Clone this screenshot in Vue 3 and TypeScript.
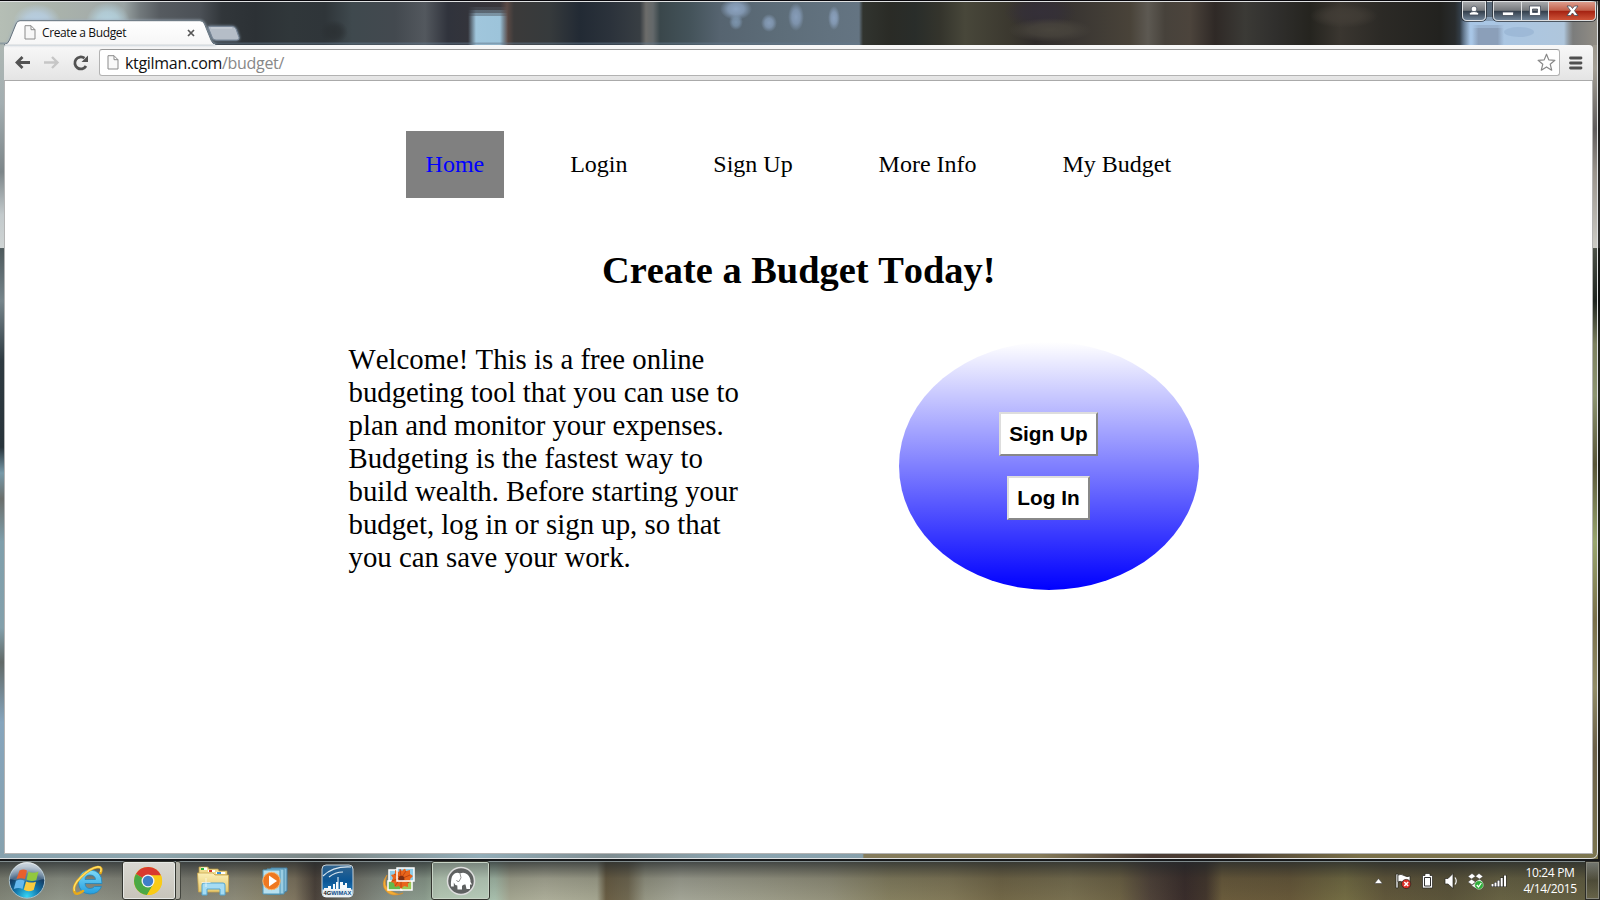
<script setup lang="ts">
interface Stop { x: number; c: string }
interface Glow { x: number; y: number; rx: number; ry: number; c: string }

const navItems: string[] = ['Home', 'Login', 'Sign Up', 'More Info', 'My Budget']
const active = 'Home'
const intro: string[] = [
  'Welcome! This is a free online',
  'budgeting tool that you can use to',
  'plan and monitor your expenses.',
  'Budgeting is the fastest way to',
  'build wealth. Before starting your',
  'budget, log in or sign up, so that',
  'you can save your work.',
]

const toStops = (list: [number, string][]): Stop[] => list.map(([x, c]) => ({ x: x / 1600, c }))

const titleStops = toStops([
  [0, '#b5beb5'], [60, '#a9b2ab'], [92, '#a5adaa'], [124, '#99a3a3'], [140, '#72797c'], [160, '#565b60'],
  [200, '#4b5056'], [222, '#31363a'], [255, '#2c3135'], [290, '#30373a'], [325, '#2f3539'], [352, '#3f494e'],
  [395, '#43494f'], [425, '#53585e'], [448, '#30333c'], [500, '#39363a'], [507, '#5c4a45'], [514, '#3b3a3a'],
  [550, '#363a3c'], [580, '#222a34'], [610, '#2b323b'], [640, '#383e43'], [646, '#6c6c6a'], [653, '#63686a'],
  [660, '#3a474b'], [690, '#44535a'], [720, '#566470'], [780, '#5d6d79'], [830, '#62727f'], [859, '#647482'],
  [863, '#31342f'], [890, '#2a2b26'], [915, '#292d2a'], [940, '#34342c'], [965, '#48473a'], [1010, '#3b382f'],
  [1035, '#2f2b2a'], [1080, '#3b3733'], [1130, '#494339'], [1148, '#5d5952'], [1165, '#47423b'], [1190, '#4c443c'],
  [1215, '#2f2926'], [1245, '#3b3a36'], [1275, '#302f2d'], [1310, '#25241f'], [1340, '#3a3630'], [1380, '#2c2a26'],
  [1440, '#22221f'], [1455, '#292c2d'], [1464, '#3b4b5c'], [1480, '#5b6c7d'], [1560, '#64727f'], [1568, '#77797a'], [1600, '#948f86'],
])
const taskStops = toStops([
  [0, '#85897b'], [60, '#959b8e'], [110, '#8f9285'], [190, '#84857a'], [235, '#918f7c'], [260, '#8e8970'],
  [295, '#827862'], [315, '#4c433b'], [332, '#5d5850'], [350, '#75766c'], [390, '#8b968c'], [425, '#8fa091'],
  [440, '#a6baa5'], [495, '#adc5b2'], [510, '#a9ab95'], [545, '#b2b39e'], [597, '#a9aa94'], [606, '#6c6045'],
  [628, '#736b53'], [645, '#9a9b88'], [680, '#a8aa9b'], [760, '#a1a18d'], [830, '#98967f'], [890, '#898362'],
  [950, '#857c5a'], [1000, '#756a49'], [1070, '#7c7352'], [1120, '#706546'], [1150, '#51443a'], [1185, '#3a2d2b'],
  [1206, '#44372d'], [1222, '#6d5e3d'], [1290, '#695a3a'], [1345, '#777045'], [1385, '#645a3c'], [1450, '#5d563b'],
  [1500, '#6a6545'], [1600, '#646042'],
])
const glows: Glow[] = [
  { x: 37, y: 22, rx: 24, ry: 18, c: '#b9d2ea' },
  { x: 108, y: 22, rx: 22, ry: 20, c: '#b8d8e6' },
  { x: 334, y: 32, rx: 14, ry: 12, c: '#2b3033' },
  { x: 736, y: 9, rx: 16, ry: 11, c: '#92aac9' },
  { x: 736, y: 22, rx: 7, ry: 8, c: '#8099b3' },
  { x: 769, y: 23, rx: 8, ry: 9, c: '#8ba2bf' },
  { x: 796, y: 17, rx: 8, ry: 14, c: '#8ba2c0' },
  { x: 834, y: 18, rx: 6, ry: 12, c: '#8fa6c4' },
  { x: 1040, y: 12, rx: 36, ry: 18, c: '#35303a' },
  { x: 1050, y: 30, rx: 42, ry: 12, c: '#4b473f' },
  { x: 1344, y: 16, rx: 34, ry: 12, c: '#433e37' },
]
</script>

<template>
  <div class="desktop">
    <svg class="wallpaper" width="1600" height="900" viewBox="0 0 1600 900">
      <defs>
        <linearGradient id="titleGlass"><stop v-for="(s, i) in titleStops" :key="i" :offset="s.x" :stop-color="s.c" /></linearGradient>
        <linearGradient id="taskGlass"><stop v-for="(s, i) in taskStops" :key="i" :offset="s.x" :stop-color="s.c" /></linearGradient>
        <radialGradient v-for="(g, i) in glows" :id="'glow' + i" :key="i">
          <stop offset="0" :stop-color="g.c" stop-opacity=".9" /><stop offset=".5" :stop-color="g.c" stop-opacity=".7" /><stop offset="1" :stop-color="g.c" stop-opacity="0" />
        </radialGradient>
        <linearGradient id="pane"><stop stop-color="#a0c6dc" stop-opacity="0" /><stop offset=".2" stop-color="#a0c6dc" /><stop offset=".8" stop-color="#9dc4da" /><stop offset="1" stop-color="#9dc4da" stop-opacity="0" /></linearGradient>
        <linearGradient id="screen"><stop stop-color="#a8c3e0" stop-opacity="0" /><stop offset=".09" stop-color="#a8c6e6" /><stop offset=".92" stop-color="#afc6dc" /><stop offset="1" stop-color="#a8b3bb" stop-opacity="0" /></linearGradient>
        <linearGradient id="patch"><stop stop-color="#8b9fb9" stop-opacity="0" /><stop offset=".2" stop-color="#8b9fb9" /><stop offset=".8" stop-color="#8b9fb9" /><stop offset="1" stop-color="#8b9fb9" stop-opacity="0" /></linearGradient>
        <linearGradient id="leftEdge" gradientUnits="userSpaceOnUse" x1="0" y1="0" x2="0" y2="860">
          <stop offset="0" stop-color="#b5bdb4" /><stop offset=".12" stop-color="#a3aeb1" />
          <stop offset=".2" stop-color="#7d8689" /><stop offset=".25" stop-color="#c3cacc" />
          <stop offset=".288" stop-color="#cfd4d4" /><stop offset=".289" stop-color="#4d595c" />
          <stop offset=".35" stop-color="#76858b" /><stop offset=".42" stop-color="#2e3a41" />
          <stop offset=".52" stop-color="#28343b" /><stop offset=".55" stop-color="#7799a8" />
          <stop offset=".58" stop-color="#6b6f6c" /><stop offset=".63" stop-color="#7f9fab" />
          <stop offset=".73" stop-color="#83a0ab" /><stop offset=".77" stop-color="#626a68" />
          <stop offset=".84" stop-color="#86a5bd" /><stop offset="1" stop-color="#86a1ad" />
        </linearGradient>
        <linearGradient id="rightEdge" gradientUnits="userSpaceOnUse" x1="0" y1="0" x2="0" y2="860">
          <stop offset="0" stop-color="#8e8a80" /><stop offset=".08" stop-color="#a5a096" />
          <stop offset=".15" stop-color="#5f5c5c" /><stop offset=".2" stop-color="#9a948c" />
          <stop offset=".288" stop-color="#cccbc5" /><stop offset=".289" stop-color="#4c5148" />
          <stop offset=".35" stop-color="#1f241f" /><stop offset=".4" stop-color="#7d8160" />
          <stop offset=".46" stop-color="#8e9672" /><stop offset=".54" stop-color="#585538" />
          <stop offset=".63" stop-color="#9aa76f" /><stop offset=".72" stop-color="#7a704a" />
          <stop offset=".8" stop-color="#928d68" /><stop offset=".87" stop-color="#6b6049" />
          <stop offset="1" stop-color="#7c7650" />
        </linearGradient>
        <linearGradient id="bottomEdge">
          <stop offset="0" stop-color="#87a2ae" /><stop offset=".1" stop-color="#8ca5ad" />
          <stop offset=".2" stop-color="#7b8584" /><stop offset=".3" stop-color="#93aeb9" />
          <stop offset=".38" stop-color="#7f8d91" /><stop offset=".46" stop-color="#8ba5b1" />
          <stop offset=".539" stop-color="#87a0ab" /><stop offset=".54" stop-color="#857c5c" />
          <stop offset=".65" stop-color="#857a59" /><stop offset=".72" stop-color="#493a33" />
          <stop offset=".77" stop-color="#4c4033" /><stop offset=".85" stop-color="#7a7049" />
          <stop offset="1" stop-color="#7c7650" />
        </linearGradient>
        <linearGradient id="barShade" x2="0" y2="1">
          <stop offset="0" stop-color="#20262a" stop-opacity=".75" /><stop offset=".45" stop-color="#222" stop-opacity=".2" />
          <stop offset="1" stop-color="#222" stop-opacity=".04" />
        </linearGradient>
      </defs>
      <rect width="1600" height="860" fill="url(#titleGlass)" />
      <ellipse v-for="(g, i) in glows" :key="i" :cx="g.x" :cy="g.y" :rx="g.rx" :ry="g.ry" :fill="`url(#glow${i})`" />
      <path d="M468 16H508V45H468z" fill="url(#pane)" />
      <path d="M468 13H508V16H468z" fill="url(#pane)" opacity=".65" />
      <path d="M468 10H508V13H468z" fill="url(#pane)" opacity=".35" />
      <path d="M468 7H508V10H468z" fill="url(#pane)" opacity=".1" />
      <path d="M1460 21H1573V45H1460z" fill="url(#screen)" />
      <path d="M1460 17H1573V21H1460z" fill="url(#screen)" opacity=".55" />
      <path d="M1472 28H1504V45H1472z" fill="url(#patch)" /><path d="M1472 25H1504V28H1472z" fill="url(#patch)" opacity=".5" />
      <ellipse cx="1519" cy="32" rx="15" ry="5" fill="#94b1d1" opacity=".6" />
      <path d="M0 43.500h860" stroke="#64798b" stroke-width="2" opacity=".5" />
      <rect y="45" width="5" height="815" fill="url(#leftEdge)" />
      <rect x="1593" y="45" width="7" height="815" fill="url(#rightEdge)" />
      <rect y="853" width="1600" height="7" fill="url(#bottomEdge)" />
      <rect y="859" width="1600" height="41" fill="url(#taskGlass)" />
      <rect y="861" width="1600" height="39" fill="url(#barShade)" />
      <path d="M0 0h1600v1H0z" fill="#08070c" />
      <path d="M1599 0v860" stroke="#0a0a0a" stroke-width="1.6" />
      <path d="M0 1.500H1591q6.500 0 6.500 6.500V852q0 6.500-6.500 6.500H0" fill="none" stroke="#dfe1e2" stroke-width="1" />
      <path d="M0 859h1600v2H0z" fill="#16181a" />
      <path d="M0 861h1600v1H0z" fill="#94a0a3" opacity=".8" />
    </svg>

    <div class="window">
      <header class="titlebar">
        <div class="tab">
          <svg class="tab-shape" width="214" height="25" viewBox="0 0 214 25">
            <defs><linearGradient id="tabFill" x2="0" y2="1"><stop stop-color="#fff" /><stop offset="1" stop-color="#f6f6f6" /></linearGradient></defs>
            <path d="M0 25Q4 24 5.500 20L12 4Q13 .7 16 .7H196Q199 .7 200.500 4L207 20Q208.500 24 212 25z" fill="url(#tabFill)" stroke="#64717c" stroke-width="1" />
            <path d="M1 25H211" stroke="#f7f7f7" stroke-width="1.500" />
          </svg>
          <svg class="page-icon" width="12" height="15" viewBox="0 0 12 15"><path d="M1 .7H7L11 4.700V14H1zM7 .7V4.700H11" fill="#f7f7f7" stroke="#8b8b8b" /></svg>
          <span class="tab-title">Create a Budget</span>
          <svg class="tab-close" width="8" height="8" viewBox="0 0 8 8"><path d="M1 1 7 7M7 1 1 7" stroke="#555" stroke-width="1.700" /></svg>
        </div>
        <svg class="new-tab" width="34" height="17" viewBox="0 0 34 17">
          <path d="M2 1.500H25Q28 1.500 29 4L32 12.500Q32.500 15 30 15H9Q6.500 15 5.500 13L1.500 3Q1 1.500 2 1.500" fill="#b5bdc7" stroke="#788697" />
          <path d="M4 3H25" stroke="#ccd3da" />
        </svg>
        <div class="spacer" />
        <svg class="controls" width="136" height="23" viewBox="0 0 136 23">
          <defs>
            <linearGradient id="glass" x2="0" y2="1">
              <stop stop-color="#a7a9ac" /><stop offset=".45" stop-color="#75787c" /><stop offset=".5" stop-color="#343f4c" /><stop offset="1" stop-color="#74879b" />
            </linearGradient>
            <linearGradient id="red" x2="0" y2="1">
              <stop stop-color="#dd9c8c" /><stop offset=".45" stop-color="#c2604b" /><stop offset=".5" stop-color="#a52212" /><stop offset="1" stop-color="#d0563a" />
            </linearGradient>
          </defs>
          <path d="M.5 0V15Q.5 20.500 6 20.500H20Q25.500 20.500 25.500 15V0M31.500 0V15Q31.500 20.500 37 20.500H130Q135.500 20.500 135.500 15V0" fill="none" stroke="#22272c" opacity=".7" />
          <path d="M1.500 1V15Q1.500 19.500 6 19.500H20Q24.500 19.500 24.500 15V1" fill="url(#glass)" stroke="#e0e2e4" />
          <path d="M32.500 1V15Q32.500 19.500 37 19.500H88V1" fill="url(#glass)" />
          <path d="M87.500 1V19.500H130Q134.500 19.500 134.500 15V1" fill="url(#red)" />
          <path d="M32.500 1V15Q32.500 19.500 37 19.500H130Q134.500 19.500 134.500 15V1M60.500 1V19M87.500 1V19" fill="none" stroke="#dcdee0" />
          <g fill="#fff" stroke="#444c5a" stroke-width=".8">
            <circle cx="13" cy="8" r="2.900" /><path d="M8.500 14V12.500Q9 10.500 13 10.500T17.500 12.500V14z" />
            <rect x="41.500" y="11" width="11" height="3.500" />
            <path fill-rule="evenodd" d="M68.500 5H79.500V14.500H68.500zM71.500 8V11.500H76.500V8z" />
            <path d="M106 5H109.500L111.500 7.500 113.500 5H117L113.500 9.700 117 14.500H113.500L111.500 12 109.500 14.500H106L109.500 9.700z" />
          </g>
        </svg>
      </header>

      <div class="toolbar">
        <svg class="nav-icons" width="94" height="35" viewBox="5 45 94 35">
          <g fill="none" stroke-width="2.800">
            <path d="M30 62.500H17.500M22.500 57 17 62.500 22.500 68" stroke="#525252" />
            <path d="M44 62.500H57M52 57 57.500 62.500 52 68" stroke="#c6c6c6" stroke-width="2.400" />
            <path d="M86 66A6 6 0 1 1 84.500 58.200" stroke="#525252" />
          </g>
          <path d="M88 55.500V62H81.500z" fill="#525252" />
        </svg>
        <div class="omnibox">
          <svg width="12" height="15" viewBox="0 0 12 15"><path d="M1 .7H7L11 4.700V14H1zM7 .7V4.700H11" fill="#f9f9f9" stroke="#8b8b8b" /></svg>
          <span class="url">ktgilman.com<i>/budget/</i></span>
          <svg class="star" width="19" height="19" viewBox="0 0 19 19"><path d="M9.500 1.200 11.800 6.900 17.900 7.300 13.200 11.200 14.700 17.200 9.500 13.900 4.300 17.200 5.800 11.200 1.100 7.300 7.200 6.900z" fill="#fff" stroke="#888" stroke-width="1.200" stroke-linejoin="round" /></svg>
        </div>
        <svg class="menu" width="14" height="14" viewBox="0 0 14 14"><path d="M1.500 2H12M1.500 7H12M1.500 12H12" stroke="#4f4f4f" stroke-width="2.800" stroke-linecap="round" /></svg>
      </div>

      <main class="page">
        <nav>
          <a v-for="item in navItems" :key="item" :class="{ active: item === active }">{{ item }}</a>
        </nav>
        <h1>Create a Budget Today!</h1>
        <section class="columns">
          <p><span v-for="line in intro" :key="line">{{ line }}</span></p>
          <div class="oval">
            <button>Sign Up</button>
            <button>Log In</button>
          </div>
        </section>
      </main>
    </div>

    <footer class="taskbar">
      <div class="cell start">
        <svg width="40" height="39" viewBox="0 0 40 39">
          <defs>
            <radialGradient id="orb" cx=".5" cy=".95" r=".85"><stop stop-color="#35d5f5" /><stop offset=".4" stop-color="#1377ac" /><stop offset=".75" stop-color="#143c63" /><stop offset="1" stop-color="#62809b" /></radialGradient>
            <linearGradient id="shine" x2="0" y2="1"><stop stop-color="#fff" stop-opacity=".7" /><stop offset="1" stop-color="#fff" stop-opacity=".15" /></linearGradient>
          </defs>
          <circle cx="20" cy="19.500" r="17.700" fill="url(#orb)" stroke="#a9c0ca" />
          <path d="M3 18A17 17 0 0 1 37 18Q20 23 3 18" fill="url(#shine)" />
          <path d="M12.500 9.500Q16.500 7.500 20 9.500L18 18Q14 16.500 9.500 18z" fill="#e8602c" />
          <path d="M21.500 10.500Q26 13 31.500 10.500L29.300 19Q24 21 19.500 18.500z" fill="#92c83e" />
          <path d="M9 19.700Q13.500 18 17.700 19.800L15.500 28Q11.500 26 6.800 28z" fill="#65b8ee" />
          <path d="M19 20.500Q23.500 22.500 29 20.700L26.700 29Q21 31.500 16.800 28.700z" fill="#fbcb3e" />
        </svg>
      </div>
      <div class="cell ie">
        <svg width="34" height="34" viewBox="0 0 34 34">
          <defs><linearGradient id="ieBlue" x2="0" y2="1"><stop stop-color="#7fdaf8" /><stop offset="1" stop-color="#249fe0" /></linearGradient></defs>
          <path d="M31 19.500H14Q14.500 24.500 19 24.500Q22 24.500 23.500 22.500H30.500Q27.500 30 19 30Q8 29.500 7.500 18Q8 6.500 19 6Q31 6.500 31 19.500M14 15.500H24.500Q24 11 19 11T14 15.500" fill="url(#ieBlue)" stroke="#2385bb" stroke-width=".8" />
          <path d="M29.500 9Q32 3 27 3Q19 4 10 13T3.500 28Q5 32 12 27" fill="none" stroke="#e8a918" stroke-width="2.600" stroke-linecap="round" />
          <path d="M29.500 8Q31.500 3 27 2.700Q19 4 10 13T3.500 27" fill="none" stroke="#ffe16a" stroke-width="1.400" />
        </svg>
      </div>
      <div class="task chrome">
        <svg width="30" height="30" viewBox="0 0 30 30">
          <circle cx="15" cy="15" r="14" fill="#f9cb16" />
          <path d="M15 15 2.900 8A14 14 0 0 1 28 9.500H15z" fill="#d93a2f" />
          <path d="M15 15 2.900 8A14 14 0 0 0 14 29L20.500 18z" fill="#4ba845" />
          <path d="M15 9.500H28A14 14 0 0 1 14 29L21 17z" fill="#f9cb16" />
          <circle cx="15" cy="15" r="6.500" fill="#f4f4f4" /><circle cx="15" cy="15" r="5.200" fill="#3f7fc9" />
        </svg>
      </div>
      <div class="stack" />
      <div class="cell explorer">
        <svg width="34" height="32" viewBox="0 0 34 32">
          <defs><linearGradient id="folder" x2="0" y2="1"><stop stop-color="#fbf0b8" /><stop offset="1" stop-color="#e7c86d" /></linearGradient></defs>
          <path d="M3 2H12L13 4H22L23 6H31V10H3z" fill="#f1dc8f" stroke="#b59540" stroke-width=".7" />
          <path d="M5 2.500H11V5H5z" fill="#fff" /><path d="M5 3H8V5H5z" fill="#27b43c" />
          <path d="M12 5H19V7H12z" fill="#fff" /><path d="M13 5H16V7H13z" fill="#d53a2b" />
          <path d="M20 7H29V9H20z" fill="#fff" /><path d="M21 7H25V9H21z" fill="#3a92d8" />
          <path d="M1.500 8H17L19 10H32.500V27H2.500z" fill="url(#folder)" stroke="#caa64e" stroke-width=".8" />
          <path d="M6 30V20Q6 18 8 18H27Q29 18 29 20V30H24V24H11V30z" fill="#a5dcf3" stroke="#55a5cf" />
          <path d="M10 13V22M5.500 17.500H14.500" stroke="#fff" stroke-width=".8" opacity=".8" />
        </svg>
      </div>
      <div class="cell media">
        <svg width="28" height="28" viewBox="0 0 28 28">
          <path d="M10 1H26V24L20 27H8z" fill="#87bcd6" stroke="#417da0" />
          <path d="M6 2H23V27H6z" fill="#9acde2" stroke="#4f91b2" /><path d="M2 3H19V27H2z" fill="#b8e0ef" stroke="#5097b8" />
          <circle cx="10.500" cy="14" r="8.700" fill="#ef7820" stroke="#f7b66e" /><path d="M8 8.500 16 14 8 19.500z" fill="#fff" />
        </svg>
      </div>
      <div class="cell wimax">
        <svg width="33" height="34" viewBox="0 0 33 34">
          <defs><linearGradient id="wx" x2="0" y2="1"><stop stop-color="#34658e" /><stop offset=".5" stop-color="#0a5595" /><stop offset="1" stop-color="#2584c4" /></linearGradient></defs>
          <rect x="1" y="1" width="31" height="32" rx="4" fill="url(#wx)" stroke="#c8d2d8" />
          <path d="M2 12Q12 2 30 3M8 13Q14 8 22 8" fill="none" stroke="#dce8f0" stroke-width="1.200" />
          <path d="M3 26V24H7V22H10V25H12V20H14V25H15V18H16.500V13H17.500V25H19V18H22V21H24V19H26V24H30V33H3z" fill="#f6f9fb" />
          <path d="M1.500 25.500H31.500V29Q31.500 32.500 28 32.500H5Q1.500 32.500 1.500 29z" fill="#e9eff3" />
          <text x="2.500" y="31.300" font-family="Liberation Sans, sans-serif" font-size="6" font-weight="700" fill="#111" textLength="28" lengthAdjust="spacingAndGlyphs">4G<tspan fill="#0b4d8b">WIMAX</tspan></text>
        </svg>
      </div>
      <div class="cell photos">
        <svg width="32" height="32" viewBox="0 0 32 32">
          <path d="M4 10Q-1 21 8 26T20 28Q9 33 3 26T4 10" fill="#f4ad35" stroke="#dc8e26" stroke-width=".6" />
          <path d="M6 5H21V20H6z" fill="#8fcde9" stroke="#fff" stroke-width="1.500" /><path d="M5 16H19V25H5z" fill="#65b94c" stroke="#fff" stroke-width="1.500" />
          <path d="M18 16H29V25H18z" fill="#9bc955" stroke="#fff" stroke-width="1.500" />
          <path d="M14 3H31V16H14z" fill="#8fcde9" />
          <path d="M17 4 19 6 22 3 23 6 27 5 27 9 30 11 27 14 28 17 25 18 25 22 21 21 18 24 16 21 12 22 11 18 8 17 10 13 8 10 12 9 12 5 16 7z" fill="#e9651b" />
          <path d="M17 4 18 12M23 6 19 12M27 10 20 13M26 18 20 14M18 23V15M12 21 17 14M9 16 17 13M11 9 17 12" stroke="#b63c0c" stroke-width=".8" />
          <circle cx="18.500" cy="13.500" r="2.800" fill="#7d2f14" />
          <path d="M14 3H31V16H14z" fill="none" stroke="#fff" stroke-width="1.500" />
        </svg>
      </div>
      <div class="task mamp">
        <svg width="30" height="30" viewBox="0 0 30 30">
          <circle cx="15" cy="15" r="13.500" fill="#5f6161" stroke="#dedede" stroke-width="1.500" />
          <path d="M5 20.500Q4.500 12 7 9Q10 5.500 14 7.500Q18 5.500 21.500 8.500Q24.500 11 24.500 16L26 18.500L24 18.500V23H20.500L19.500 18.500Q17 18 16 20V23.500H11.500L11.300 19.500Q8.500 19 7.800 16.500V20.500z" fill="#fff" />
          <path d="M14 7.500Q16.500 12 13 15.500Q11 16 10.500 14" fill="none" stroke="#777" stroke-width=".8" />
        </svg>
      </div>
      <div class="spacer" />
      <svg class="tray" width="140" height="39" viewBox="1370 861 140 39">
        <path d="M1374.500 883.500 1378.500 878.500 1382.500 883.500z" fill="#fff" stroke="#333" stroke-width=".5" />
        <g stroke="#24231d" stroke-width=".7">
          <path d="M1396 874H1398V888H1396z" fill="#fff" /><path d="M1398 875Q1401 873.500 1404 875.500T1410 876V883Q1406 884.500 1403 882.500T1398 882z" fill="#fff" />
          <circle cx="1406.200" cy="884" r="4.600" fill="#dc2f27" />
          <path d="M1425 873.500H1430V875.500H1432.500V888H1422.500V875.500H1425z" fill="#fff" />
          <path d="M1445 878.500H1448L1453 873.500V888.500L1448 884H1445z" fill="#fff" />
        </g>
        <path d="M1404.300 882 1408.200 886M1408.200 882 1404.300 886" stroke="#fff" stroke-width="1.500" />
        <path d="M1424.500 877.500H1430.500V886H1424.500z" fill="#fff" stroke="#333" />
        <path d="M1455 877.500Q1457.500 881 1455 884.500" fill="none" stroke="#f5f5f5" stroke-width="1.200" />
        <g fill="#fff" stroke="#333" stroke-width=".4"><path d="M1468 876.500 1472 873.500 1475.500 876.300 1471.500 879zM1475.500 876.300 1479 873.500 1483 876.500 1479.500 879zM1468 882 1471.500 879.200 1475.500 882 1472 884.700zM1475.500 882 1479.500 879.200 1483 882 1479 884.700zM1471.500 885.500 1475.500 883 1479 885.500 1475.500 888.200z" /></g>
        <circle cx="1479" cy="885" r="4.300" fill="#2fae3a" stroke="#dcefdc" stroke-width=".5" /><path d="M1476.800 885 1478.500 887 1481.300 883" fill="none" stroke="#fff" stroke-width="1.300" />
        <path d="M1492.500 884V887M1495.500 882V887M1498.500 880V887M1501.700 877.500V887M1505 875V887" stroke="#222" stroke-width="3" />
        <path d="M1492.500 884V886.500M1495.500 882.500V886.500M1498.500 880.500V886.500M1501.700 878V886.500M1505 875.500V886.500" stroke="#fff" stroke-width="2" />
      </svg>
      <div class="clock"><span>10:24 PM</span><span class="date">4/14/2015</span></div>
      <div class="show-desktop" />
    </footer>
  </div>
</template>

<style>
html, body { margin: 0; overflow: hidden; }
</style>

<style scoped>
.desktop { position: relative; width: 1600px; height: 900px; overflow: hidden; display: flex; flex-direction: column; }
.wallpaper { position: absolute; inset: 0; }
svg { display: block; flex: none; }
.window { position: relative; height: 861px; box-sizing: border-box; padding: 1px 7px 7px 4px; display: flex; flex-direction: column; }
.titlebar { height: 44px; display: flex; align-items: flex-start; font-family: "Open Sans", "Noto Sans", sans-serif; }
.tab { position: relative; width: 203px; height: 25px; margin-top: 19px; display: flex; align-items: center; }
.tab-shape { position: absolute; left: 0; top: 0; filter: drop-shadow(0 0 1.5px #9fb0bd); }
.page-icon { position: relative; margin-left: 20px; }
.tab-title { position: relative; margin-left: 6px; width: 141px; font-size: 12px; letter-spacing: -.38px; line-height: 24px; color: #111; white-space: nowrap; }
.tab-close { position: relative; margin-left: 4px; }
.new-tab { margin: 24px 0 0; filter: drop-shadow(0 0 1.5px #8aa0b5); }
.spacer { flex: 1; }
.controls { margin-right: -4px; }
.toolbar { height: 36px; display: flex; align-items: center; box-sizing: border-box; padding-left: 1px; background: linear-gradient(#f8f8f8, #e4e4e4); border-radius: 3px 4px 0 0; border-bottom: 1px solid #aaa; }
.omnibox { width: 1461px; height: 27px; box-sizing: border-box; border: 1px solid #b2b2b2; border-top-color: #999; border-radius: 3px; background: #fff; display: flex; align-items: center; padding: 0 3px 0 7px; }
.url { margin-left: 6px; flex: 1; font: 16px/24px "Open Sans", "Noto Sans", sans-serif; letter-spacing: -.31px; color: #111; }
.url i { font-style: normal; color: #888; }
.menu { margin-left: 9px; }
.page { flex: 1; background: #fff; border: solid #b4b4b4; border-width: 0 1px 1px; font-family: "Liberation Serif", serif; font-kerning: none; color: #000; }
nav { display: flex; gap: 46.700px; margin: 50px 0 0 401px; }
nav a { font-size: 24px; line-height: 27px; padding: 20px 19.600px; white-space: nowrap; }
nav .active { background: #808080; color: #00f; }
h1 { margin: 50px 0 0 597px; font-size: 38.400px; line-height: 44px; font-weight: 700; white-space: nowrap; }
.columns { display: flex; align-items: flex-start; margin: 50px 0 0 343.500px; }
p { margin: 0; padding-top: 1px; width: 550px; font-size: 28.800px; line-height: 33px; }
p span { display: block; white-space: nowrap; }
.oval { width: 300px; height: 248px; margin-left: .5px; border-radius: 50%; background: linear-gradient(#fff, #00f); display: flex; flex-direction: column; align-items: center; justify-content: center; gap: 20px; }
button { margin: 0 1px 0 0; padding: 8px; height: 44px; font: 700 20.800px/24px "Liberation Sans", sans-serif; color: #000; background: #fff; border: 2px solid; border-color: #ddd #888 #888 #ddd; }
.taskbar { position: relative; height: 39px; display: flex; align-items: stretch; }
.cell { display: flex; align-items: center; justify-content: center; }
.start { width: 54px; }
.ie { width: 68px; }
.explorer { width: 64px; }
.media { width: 60px; }
.wimax { width: 64px; }
.photos { width: 60px; }
.task { display: flex; align-items: center; justify-content: center; box-sizing: border-box; border: 1px solid #33352f; border-radius: 3px; box-shadow: inset 0 0 0 1px #e6e8e4; }
.chrome { width: 54px; padding-right: 2px; background: linear-gradient(#dad8d2, #c7c4ba); }
.stack { width: 5px; box-sizing: border-box; border: solid #44463f; border-width: 1px 1px 1px 0; background: #b0afa5; border-radius: 0 3px 3px 0; }
.mamp { width: 59px; margin-left: 2px; background: rgba(210, 225, 210, .35); box-shadow: inset 0 0 0 1px #c7d3c5; }
.clock { width: 60px; margin-left: 10px; padding-top: 4px; box-sizing: border-box; display: flex; flex-direction: column; align-items: center; font: 12px/16px "Open Sans", "Noto Sans", sans-serif; letter-spacing: -.35px; color: #fff; white-space: nowrap; }
.date { letter-spacing: -.4px; }
.show-desktop { width: 15px; margin-left: 5px; box-sizing: border-box; border: 1px solid #2b2b26; box-shadow: inset 0 0 0 1px #87877b; background: linear-gradient(rgba(180, 185, 180, .5), rgba(60, 60, 50, .4) 50%, rgba(120, 115, 90, .3)); }
</style>
